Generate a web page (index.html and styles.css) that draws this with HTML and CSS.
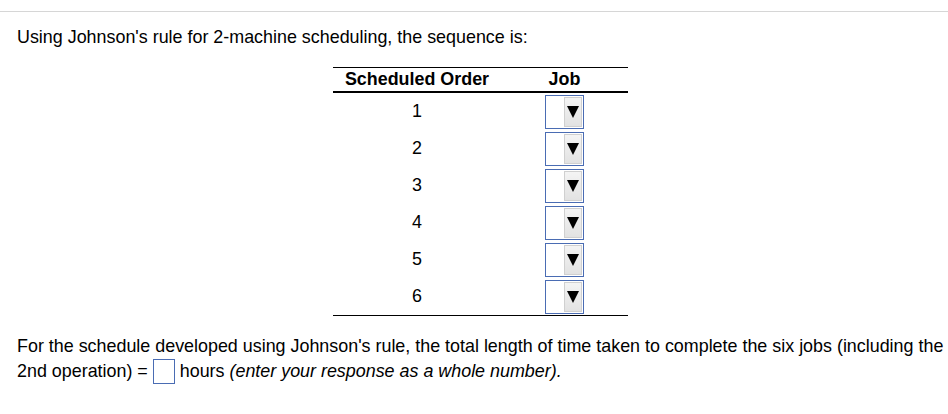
FILE: index.html
```html
<!DOCTYPE html>
<html>
<head>
<meta charset="utf-8">
<link rel="stylesheet" href="styles.css">
</head>
<body>
<div class="rule"></div>
<div class="content">
  <p class="intro">Using Johnson's rule for 2-machine scheduling, the sequence is:</p>
  <div class="table-wrap">
    <table class="sched">
      <thead>
        <tr><th class="c1">Scheduled Order</th><th class="c2">Job</th></tr>
      </thead>
      <tbody>
        <tr><td class="c1">1</td><td class="c2"><span class="sel"><span class="btn"><span class="tri"></span></span></span></td></tr>
        <tr><td class="c1">2</td><td class="c2"><span class="sel"><span class="btn"><span class="tri"></span></span></span></td></tr>
        <tr><td class="c1">3</td><td class="c2"><span class="sel"><span class="btn"><span class="tri"></span></span></span></td></tr>
        <tr><td class="c1">4</td><td class="c2"><span class="sel"><span class="btn"><span class="tri"></span></span></span></td></tr>
        <tr><td class="c1">5</td><td class="c2"><span class="sel"><span class="btn"><span class="tri"></span></span></span></td></tr>
        <tr><td class="c1">6</td><td class="c2"><span class="sel"><span class="btn"><span class="tri"></span></span></span></td></tr>
      </tbody>
    </table>
  </div>
  <p class="answer">For the schedule developed using Johnson's rule, the total length of time taken to complete the six jobs (including the 2nd operation)&nbsp;=&nbsp;<span class="box"></span>&nbsp;hours <em>(enter your response as a whole number).</em></p>
</div>
</body>
</html>
```

FILE: styles.css
```css
html, body {
  margin: 0;
  padding: 0;
  background: #fff;
}
body {
  font-family: "Liberation Sans", Arial, sans-serif;
  color: #000;
  font-size: 17.9px;
}
.rule {
  margin-top: 11px;
  height: 1px;
  background: #d6d6d6;
}
.content {
  padding: 0 0 0 17px;
}
.intro {
  margin: 15px 0 0 0;
  line-height: 21px;
}
.table-wrap {
  margin: 19px 0 0 316px;
}
.sched {
  border-collapse: collapse;
  width: 295px;
}
.sched th {
  font-size: 17.9px;
  font-weight: bold;
  height: 23px;
  padding: 0;
  border-top: 1px solid #000;
  border-bottom: 2px solid #000;
  text-align: center;
}
.sched th.c1 { width: 168px; }
.sched td {
  font-size: 17.9px;
  text-align: center;
  padding: 0;
  height: 37px;
}
.sched tbody tr:last-child td { border-bottom: 1px solid #000; }
.sel {
  display: inline-flex;
  justify-content: flex-end;
  align-items: center;
  box-sizing: border-box;
  width: 39px;
  height: 34px;
  border: 1px solid #4a6cb3;
  background: #fff;
  vertical-align: middle;
  padding-right: 1px;
}
.btn {
  display: flex;
  align-items: center;
  justify-content: center;
  width: 18px;
  height: 30px;
  background: linear-gradient(to bottom, #f4f4f4, #e2e2e2);
  border: 1px solid #d0d0d0;
  box-sizing: border-box;
}
.tri {
  width: 0;
  height: 0;
  border-left: 6px solid transparent;
  border-right: 6px solid transparent;
  border-top: 12px solid #000;
}
.answer {
  margin: 18px 0 0 0;
  line-height: 25px;
}
.box {
  display: inline-block;
  box-sizing: border-box;
  width: 22px;
  height: 25px;
  border: 1px solid #4a6cb3;
  vertical-align: -7px;
}
```
